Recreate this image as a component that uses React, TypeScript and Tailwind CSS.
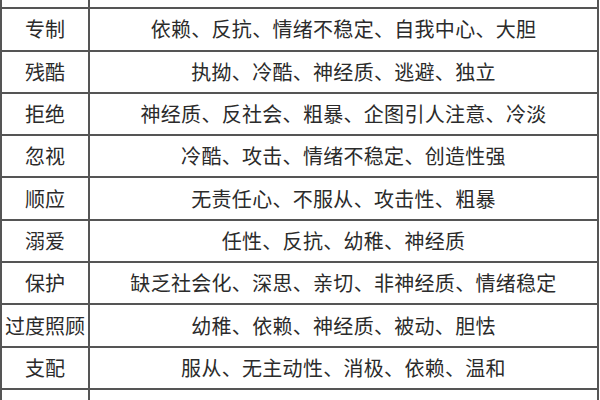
const rows: [string, string][] = [
  ["", ""],
  ["专制", "依赖、反抗、情绪不稳定、自我中心、大胆"],
  ["残酷", "执拗、冷酷、神经质、逃避、独立"],
  ["拒绝", "神经质、反社会、粗暴、企图引人注意、冷淡"],
  ["忽视", "冷酷、攻击、情绪不稳定、创造性强"],
  ["顺应", "无责任心、不服从、攻击性、粗暴"],
  ["溺爱", "任性、反抗、幼稚、神经质"],
  ["保护", "缺乏社会化、深思、亲切、非神经质、情绪稳定"],
  ["过度照顾", "幼稚、依赖、神经质、被动、胆怯"],
  ["支配", "服从、无主动性、消极、依赖、温和"],
  ["", ""],
];

export default function App() {
  return (
    <div className="w-[600px] h-[400px] overflow-hidden bg-white">
      <div
        className="w-[599px] -mt-[33px] border-l-2 border-r-2 border-[#555] text-[20px] text-[#2b2b2b]"
        style={{ fontFamily: '"Noto Sans CJK SC", "Noto Sans", sans-serif' }}
      >
        {rows.map(([k, v], i) => (
          <div key={i} className="flex h-[42.3px] border-b-2 border-[#555]">
            <div className="w-[88px] shrink-0 flex items-center justify-center border-r-2 border-[#555] whitespace-nowrap">
              {k}
            </div>
            <div className="flex-1 flex items-center justify-center whitespace-nowrap tracking-[0.3px]">{v}</div>
          </div>
        ))}
      </div>
    </div>
  );
}
